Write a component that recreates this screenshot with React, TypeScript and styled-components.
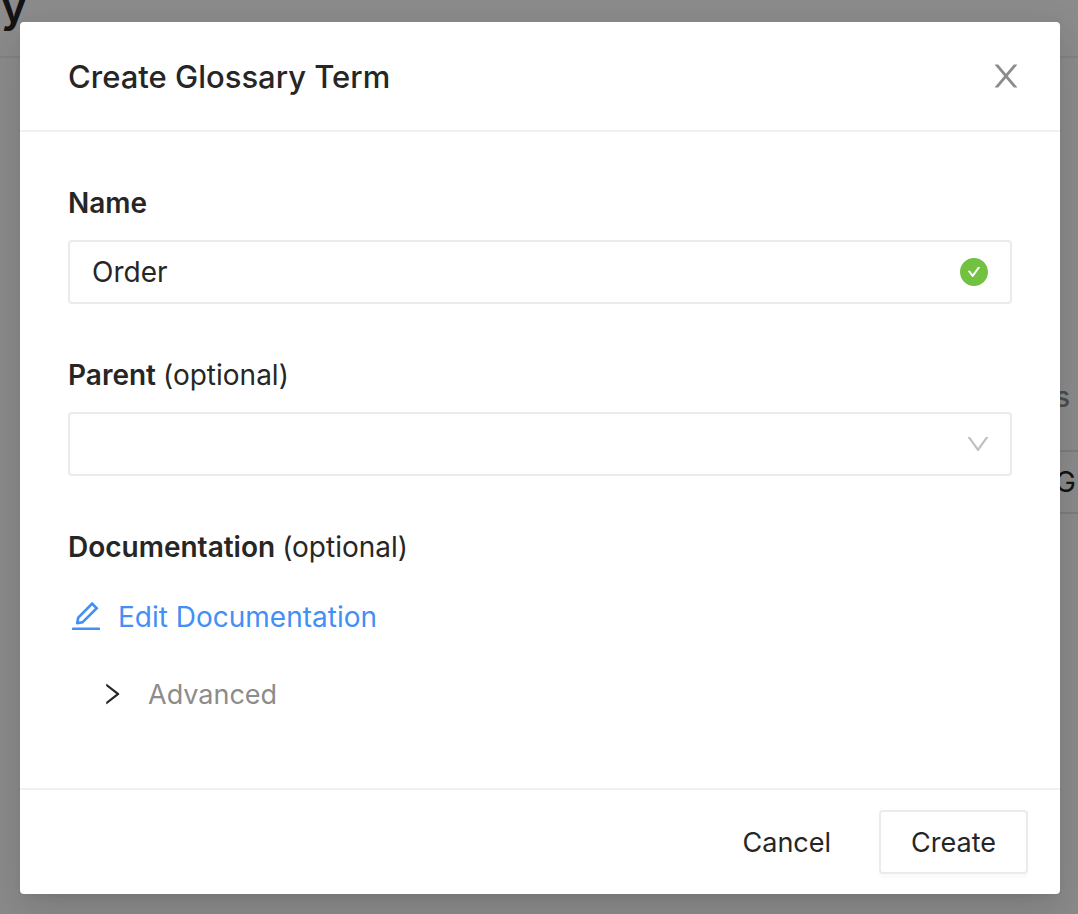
import React, { useState } from "react";
import styled, { createGlobalStyle } from "styled-components";

const GlobalStyle = createGlobalStyle`
  *, *::before, *::after { box-sizing: border-box; }
  body {
    margin: 0;
    background: #ffffff;
    color: #262626;
    font-family: Inter, "Liberation Sans", sans-serif;
    font-size: 28px;
    line-height: 46px;
    -webkit-font-smoothing: antialiased;
  }
  button, input, select { font: inherit; color: inherit; }
`;

const Screen = styled.div`
  position: relative;
  min-height: 100vh;
  padding: 22px 18px 20px 20px;
`;

const Backdrop = styled.div`
  position: absolute;
  inset: 0;
  overflow: hidden;
`;

const BackdropHeader = styled.div`
  display: flex;
  align-items: flex-end;
  height: 58px;
  padding: 0 0 22px 1px;
  border-bottom: 2px solid #eeeeee;
`;

const BackdropTitle = styled.div`
  font-size: 44px;
  line-height: 56px;
  font-weight: 600;
`;

const BackdropSide = styled.div`
  display: flex;
  flex-direction: column;
  align-items: flex-end;
  gap: 30px;
  padding-top: 316px;
`;

const BackdropMeta = styled.div`
  padding-right: 8px;
  color: #8c8c8c;
  font-weight: 500;
`;

const BackdropField = styled.div`
  width: 64px;
  height: 64px;
  padding-right: 2px;
  border: 2px solid #e4e4e4;
  border-right: 0;
  line-height: 60px;
  text-align: right;
`;

const Mask = styled.div`
  position: absolute;
  inset: 0;
  background: rgba(0, 0, 0, 0.45);
`;

const Dialog = styled.form`
  position: relative;
  background: #ffffff;
  border-radius: 4px;
  box-shadow:
    0 6px 12px -8px rgba(0, 0, 0, 0.12),
    0 12px 32px rgba(0, 0, 0, 0.08),
    0 18px 56px 16px rgba(0, 0, 0, 0.05);
`;

const Header = styled.header`
  display: flex;
  align-items: flex-start;
  justify-content: space-between;
  padding: 32px 36px 30px 48px;
  border-bottom: 2px solid #f0f0f0;
`;

const Title = styled.h1`
  margin: 0;
  font-size: 31px;
  line-height: 46px;
  font-weight: 500;
`;

const PlainButton = styled.button`
  display: flex;
  align-items: center;
  padding: 0;
  border: 0;
  background: none;
  cursor: pointer;
`;

const CloseButton = styled(PlainButton)`
  height: 44px;
  color: #8c8c8c;
`;

const Body = styled.div`
  padding: 48px 48px 72px;
`;

const Field = styled.div`
  display: flex;
  flex-direction: column;
  gap: 14px;
  margin-bottom: 48px;
`;

const Label = styled.label`
  font-weight: 600;
`;

const SectionLabel = styled.div`
  margin-bottom: 14px;
  font-weight: 600;
`;

const Optional = styled.span`
  font-weight: 400;
`;

const Control = styled.div`
  display: flex;
  align-items: center;
  position: relative;
`;

const controlStyle = `
  width: 100%;
  height: 64px;
  padding: 0 72px 0 22px;
  border: 2px solid #ebebeb;
  border-radius: 4px;
  background: #ffffff;
  outline: none;
`;

const TextInput = styled.input`
  ${controlStyle}
`;

const Select = styled.select`
  ${controlStyle}
  appearance: none;
`;

const ControlIcon = styled.span<{ $right: number; $color: string }>`
  position: absolute;
  right: ${(p) => p.$right}px;
  display: flex;
  color: ${(p) => p.$color};
  pointer-events: none;
`;

const EditButton = styled(PlainButton)`
  gap: 14px;
  height: 64px;
  margin-bottom: 24px;
  color: #448ff5;
`;

const AdvancedToggle = styled(PlainButton)`
  gap: 22px;
  height: 44px;
  margin-left: 30px;
`;

const ButtonText = styled.span`
  padding-top: 2px;
`;

const AdvancedText = styled(ButtonText)`
  color: #8c8c8c;
  font-size: 27px;
`;

const Footer = styled.footer`
  display: flex;
  justify-content: flex-end;
  gap: 16px;
  padding: 20px 32px;
  border-top: 2px solid #f0f0f0;
`;

const ActionButton = styled.button<{ $outlined?: boolean }>`
  height: 64px;
  padding: 2px 30px 0;
  border: 2px solid ${(p) => (p.$outlined ? "#ebebeb" : "transparent")};
  border-radius: 4px;
  background: ${(p) => (p.$outlined ? "#ffffff" : "transparent")};
  box-shadow: ${(p) => (p.$outlined ? "0 4px 0 rgba(0, 0, 0, 0.016)" : "none")};
  font-size: 27px;
  cursor: pointer;
`;

const icons = {
  close:
    "M563.8 512l262.5-312.9c4.4-5.2.7-13.1-6.1-13.1h-79.8c-4.7 0-9.2 2.1-12.3 5.7L511.6 449.8 295.1 191.7c-3-3.6-7.5-5.7-12.3-5.7H203c-6.8 0-10.5 7.9-6.1 13.1L459.4 512 196.9 824.9A7.95 7.95 0 00203 838h79.8c4.7 0 9.2-2.1 12.3-5.7l216.5-258.1 216.5 258.1c3 3.6 7.5 5.7 12.3 5.7h79.8c6.8 0 10.5-7.9 6.1-13.1L563.8 512z",
  check:
    "M512 64C264.6 64 64 264.6 64 512s200.6 448 448 448 448-200.6 448-448S759.4 64 512 64zm193.5 301.7l-210.6 292a31.8 31.8 0 01-51.7 0L318.5 484.9c-3.8-5.3 0-12.7 6.5-12.7h46.9c10.2 0 19.9 4.9 25.9 13.3l71.2 98.8 157.2-218c6-8.3 15.6-13.3 25.9-13.3H699c6.5 0 10.3 7.4 6.5 12.7z",
  down:
    "M884 256h-75c-5.1 0-9.9 2.5-12.9 6.6L512 654.2 227.9 262.6c-3-4.1-7.8-6.6-12.9-6.6h-75c-6.5 0-10.3 7.4-6.5 12.7l352.6 486.1c12.8 17.6 39 17.6 51.7 0l352.6-486.1c3.9-5.3.1-12.7-6.4-12.7z",
  right:
    "M765.7 486.8L314.9 134.7A7.97 7.97 0 00302 141v77.3c0 4.9 2.3 9.6 6.1 12.6l360 281.1-360 281.1c-3.9 3-6.1 7.7-6.1 12.6V883c0 6.7 7.7 10.4 12.9 6.3l450.8-352.1a31.96 31.96 0 000-50.4z",
  edit:
    "M257.7 752c2 0 4-.2 6-.5L431.9 722c2-.4 3.9-1.3 5.3-2.8l423.9-423.9a9.96 9.96 0 000-14.1L694.9 114.9c-1.9-1.9-4.4-2.9-7.1-2.9s-5.2 1-7.1 2.9L256.8 538.8c-1.5 1.5-2.4 3.3-2.8 5.3l-29.5 168.2a33.5 33.5 0 009.4 29.8c6.6 6.4 14.9 9.9 23.8 9.9zm67.4-174.4L687.8 215l73.3 73.3-362.7 362.6-88.9 15.7 15.6-89zM880 836H144c-17.7 0-32 14.3-32 32v36c0 4.4 3.6 8 8 8h784c4.4 0 8-3.6 8-8v-36c0-17.7-14.3-32-32-32z",
};

function Icon({ name, size }: { name: keyof typeof icons; size: number }) {
  return (
    <svg width={size} height={size} viewBox="0 0 1024 1024" fill="currentColor" aria-hidden="true">
      <path d={icons[name]} />
    </svg>
  );
}

export default function App() {
  const [name, setName] = useState("Order");
  const [advanced, setAdvanced] = useState(false);

  return (
    <Screen>
      <GlobalStyle />
      <Backdrop aria-hidden="true">
        <BackdropHeader>
          <BackdropTitle>y</BackdropTitle>
        </BackdropHeader>
        <BackdropSide>
          <BackdropMeta>s</BackdropMeta>
          <BackdropField>G</BackdropField>
        </BackdropSide>
        <Mask />
      </Backdrop>

      <Dialog role="dialog" aria-labelledby="dialog-title" onSubmit={(e) => e.preventDefault()}>
        <Header>
          <Title id="dialog-title">Create Glossary Term</Title>
          <CloseButton type="button" aria-label="Close">
            <Icon name="close" size={36} />
          </CloseButton>
        </Header>

        <Body>
          <Field>
            <Label htmlFor="term-name">Name</Label>
            <Control>
              <TextInput id="term-name" value={name} onChange={(e) => setName(e.target.value)} />
              <ControlIcon $right={22} $color="#73c140">
                <Icon name="check" size={32} />
              </ControlIcon>
            </Control>
          </Field>

          <Field>
            <Label htmlFor="term-parent">
              Parent <Optional>(optional)</Optional>
            </Label>
            <Control>
              <Select id="term-parent" defaultValue="">
                <option value="" />
              </Select>
              <ControlIcon $right={20} $color="#bfbfbf">
                <Icon name="down" size={28} />
              </ControlIcon>
            </Control>
          </Field>

          <SectionLabel>
            Documentation <Optional>(optional)</Optional>
          </SectionLabel>
          <EditButton type="button">
            <Icon name="edit" size={36} />
            <ButtonText>Edit Documentation</ButtonText>
          </EditButton>
          <AdvancedToggle
            type="button"
            aria-expanded={advanced}
            onClick={() => setAdvanced(!advanced)}
          >
            <Icon name="right" size={28} />
            <AdvancedText>Advanced</AdvancedText>
          </AdvancedToggle>
        </Body>

        <Footer>
          <ActionButton type="button">Cancel</ActionButton>
          <ActionButton type="submit" $outlined>
            Create
          </ActionButton>
        </Footer>
      </Dialog>
    </Screen>
  );
}
